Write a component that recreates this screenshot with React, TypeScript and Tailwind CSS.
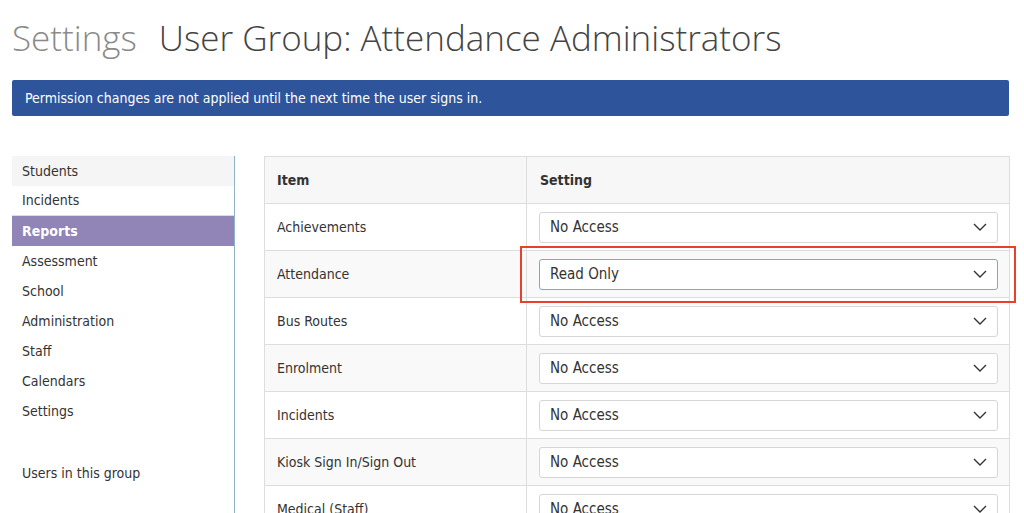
import React from "react";

const body = { fontFamily: '"DejaVu Sans Condensed", "DejaVu Sans", Verdana, sans-serif' };

const navItems = ["Students", "Incidents", "Reports", "Assessment", "School", "Administration", "Staff", "Calendars", "Settings"];

const rows: { item: string; value: string; striped: boolean; focus?: boolean }[] = [
  { item: "Achievements", value: "No Access", striped: false },
  { item: "Attendance", value: "Read Only", striped: true, focus: true },
  { item: "Bus Routes", value: "No Access", striped: false },
  { item: "Enrolment", value: "No Access", striped: true },
  { item: "Incidents", value: "No Access", striped: false },
  { item: "Kiosk Sign In/Sign Out", value: "No Access", striped: true },
  { item: "Medical (Staff)", value: "No Access", striped: false },
];

function Chevron() {
  return (
    <svg width="14" height="8" viewBox="0 0 14 8" fill="none" className="shrink-0">
      <path d="M1 1 L7 7 L13 1" stroke="#333" strokeWidth="1.4" />
    </svg>
  );
}

function Select({ value, focus }: { value: string; focus?: boolean }) {
  return (
    <div
      className={`flex items-center justify-between h-[31px] rounded-[3px] bg-white pl-[10px] pr-[10px] border ${
        focus ? "border-[#7fa6cc]" : "border-[#d6d6d6]"
      }`}
    >
      <span className="text-[15px] text-[#333]">{value}</span>
      <Chevron />
    </div>
  );
}

export default function App() {
  return (
    <div className="w-[1024px] h-[513px] overflow-hidden bg-white" style={body}>
      <div className="px-[12px]">
        <h1
          className="pt-[14px] h-[80px] text-[35px] font-light leading-[48px] text-[#444] whitespace-nowrap"
          style={{ fontFamily: '"Open Sans", sans-serif' }}
        >
          <span className="text-[#8a8a8a]">Settings</span>
          <span className="ml-[22px]">User Group: Attendance Administrators</span>
        </h1>
        <div className="h-[36px] w-[997px] bg-[#2e559c] rounded-[2px] flex items-center px-[13px] text-white text-[14px]">
          Permission changes are not applied until the next time the user signs in.
        </div>
        <div className="flex mt-[40px]">
          <div className="w-[223px] shrink-0 border-r border-[#8fb4c9] h-[400px]">
            {navItems.map((n, i) => (
              <div
                key={n}
                className={`h-[30px] flex items-center pl-[10px] text-[14px] ${
                  n === "Reports"
                    ? "bg-[#9184b6] text-white font-bold"
                    : i === 0
                    ? "bg-[#f5f5f5] text-[#333]"
                    : "text-[#333]"
                } ${n === "Incidents" ? "border-b border-[#dcdcdc]" : ""}`}
              >
                {n}
              </div>
            ))}
            <div className="h-[30px] mt-[32px] flex items-center pl-[10px] text-[14px] text-[#333]">Users in this group</div>
          </div>
          <div className="ml-[29px] w-[746px] border-l border-r border-t border-[#dddddd]">
            <div className="flex h-[47px] bg-[#f7f7f7] border-b border-[#dddddd] text-[14px] font-bold text-[#333]">
              <div className="w-[262px] border-r border-[#dddddd] flex items-center pl-[12px]">Item</div>
              <div className="flex-1 flex items-center pl-[13px]">Setting</div>
            </div>
            {rows.map((r) => (
              <div
                key={r.item}
                className={`flex h-[47px] border-b border-[#dddddd] text-[14px] text-[#333] ${r.striped ? "bg-[#f9f9f9]" : "bg-white"}`}
              >
                <div className="w-[262px] border-r border-[#dddddd] flex items-center pl-[12px]">{r.item}</div>
                <div className="flex-1 flex items-center pl-[12px] pr-[11px] relative">
                  <div className="w-full">
                    <Select value={r.value} focus={r.focus} />
                  </div>
                  {r.focus && (
                    <div className="absolute left-[-7px] right-[-7px] top-[-5px] bottom-[-6px] border-2 border-[#e8402c] pointer-events-none" />
                  )}
                </div>
              </div>
            ))}
          </div>
        </div>
      </div>
    </div>
  );
}
